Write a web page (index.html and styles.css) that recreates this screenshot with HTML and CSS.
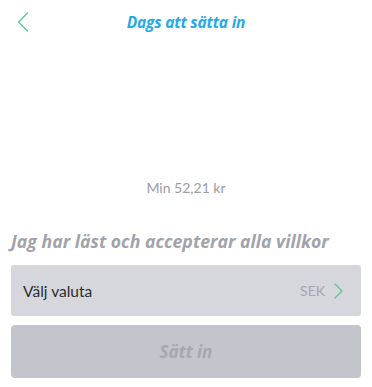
FILE: index.html
```html
<!DOCTYPE html>
<html lang="sv">
<head>
<meta charset="utf-8">
<link rel="stylesheet" href="styles.css">
</head>
<body>
<div class="page">
  <header class="topbar">
    <button class="back" aria-label="Tillbaka">
      <svg width="12" height="20" viewBox="0 0 12 20"><path d="M10.5 1 L1.5 10 L10.5 19" fill="none" stroke="#5cc796" stroke-width="1.3" stroke-linecap="round" stroke-linejoin="round"/></svg>
    </button>
    <h1 class="title">Dags att sätta in</h1>
  </header>
  <div class="amount-area">
    <p class="min">Min 52,21 kr</p>
  </div>
  <p class="terms">Jag har läst och accepterar alla villkor</p>
  <div class="select">
    <span class="select-label">Välj valuta</span>
    <span class="select-value">SEK
      <svg width="9" height="16" viewBox="0 0 9 16"><path d="M1 1 L8 8 L1 15" fill="none" stroke="#5cc796" stroke-width="1.3" stroke-linecap="round" stroke-linejoin="round"/></svg>
    </span>
  </div>
  <button class="submit">Sätt in</button>
</div>
</body>
</html>
```
FILE: styles.css
```css
* { box-sizing: border-box; }
html, body { margin: 0; padding: 0; background: #fff; }
body { font-family: Lato, "Open Sans", sans-serif; width: 372px; height: 387px; overflow: hidden; }
.page { padding: 0 11px; }
.topbar { position: relative; height: 44px; display: flex; align-items: center; justify-content: center; }
.back { position: absolute; left: 6px; top: 12px; background: none; border: 0; padding: 0; display: block; }
.back svg { display: block; }
.title { margin: 0; font-family: "Open Sans", sans-serif; font-size: 15.5px; font-weight: 700; font-style: italic; color: #26a9e8; letter-spacing: -0.2px; }
.amount-area { height: 162px; display: flex; align-items: flex-end; justify-content: center; }
.min { margin: 0 0 10px; font-size: 14px; color: #9b9da6; }
.terms { margin: 24px 0 0; font-family: "Open Sans", sans-serif; font-size: 17.7px; font-weight: 700; font-style: italic; color: #a1a3ab; line-height: 22px; }
.select { margin-top: 13px; height: 51px; background: #d5d7dc; border-radius: 3px; display: flex; align-items: center; justify-content: space-between; padding: 0 18px 0 12px; }
.select-label { font-size: 15.5px; color: #2b2c30; }
.select-value { display: flex; align-items: center; gap: 9px; font-size: 14px; color: #a4a6ad; }
.select-value svg { display: block; }
.submit { margin-top: 9px; width: 100%; height: 53px; background: #c2c5cc; border: 0; border-radius: 4px; font-family: "Open Sans", sans-serif; font-size: 17px; font-weight: 700; font-style: italic; color: #a5a8b0; display: block; }
```
